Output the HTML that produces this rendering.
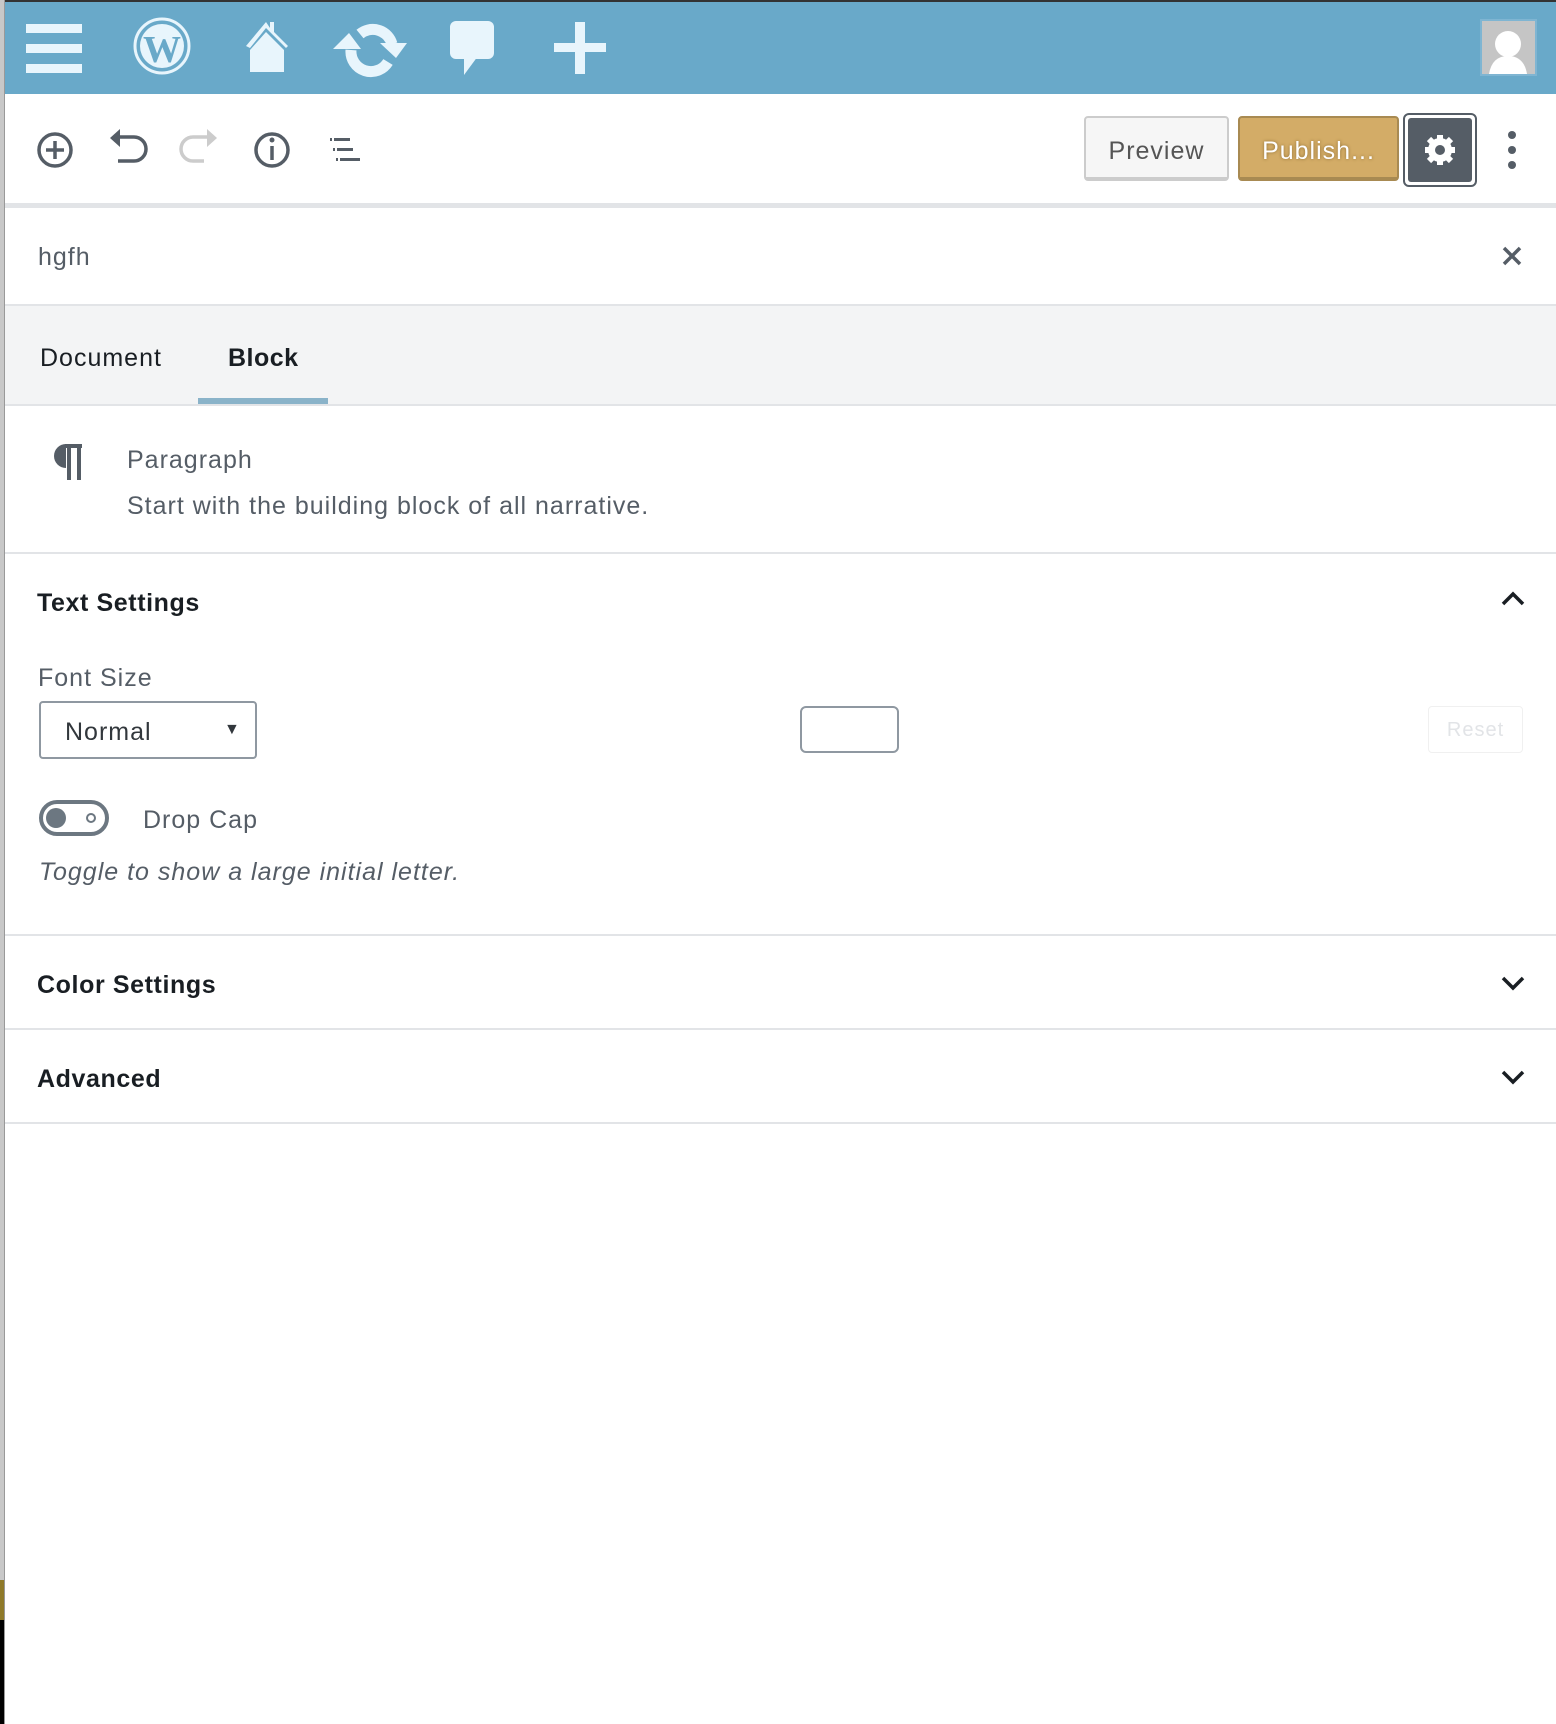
<!DOCTYPE html>
<html><head><meta charset="utf-8"><style>
*{margin:0;padding:0;box-sizing:border-box}
html,body{width:1556px;height:1724px;overflow:hidden;background:#fff;font-family:"Liberation Sans",sans-serif}
.abs{position:absolute}
#strip{left:0;top:0;width:5px;height:1724px;background:#c8c8c8;border-right:1px solid #999}
#bar{left:0;top:0;width:1556px;height:94px;background:#69a9c9;border-top:2px solid #333}
.t{position:absolute;white-space:nowrap;letter-spacing:1px}
.sep{position:absolute;left:5px;width:1551px;height:2px;background:#e2e4e7}
</style></head><body>
<div class="abs" id="bar">
<svg class="abs" style="left:0;top:-2px" width="1556" height="94">
 <g fill="#e8f5fc">
  <rect x="26" y="24" width="56" height="9"/><rect x="26" y="44" width="56" height="9"/><rect x="26" y="64" width="56" height="9"/>
  <circle cx="162" cy="46" r="27" fill="none" stroke="#e8f5fc" stroke-width="3"/>
  <circle cx="162" cy="46" r="22"/>
  <path d="M246 46 L266 22 L270 28 L270 22 L274 22 L274 32 L288 46 L286 48 L266 28 L250 48 Z"/>
  <path d="M250 50 L266 32 L284 50 L284 72 L250 72 Z"/>
  <path d="M360 34 A20 20 0 0 1 392 44" fill="none" stroke="#e8f5fc" stroke-width="11"/>
  <path d="M380 43 L407 43 L396 58 Z"/>
  <path d="M388 62 A20 20 0 0 1 351 50" fill="none" stroke="#e8f5fc" stroke-width="11"/>
  <path d="M333 49 L361 49 L349 33 Z"/>
  <rect x="450" y="21" width="44" height="38" rx="6"/><path d="M464 56 L464 75 L478 56 Z"/>
  <rect x="554" y="43" width="52" height="9"/><rect x="575" y="22" width="10" height="52"/>
  <rect x="1481" y="20" width="55" height="55" fill="#c5c5c5" stroke="#7fb5d2" stroke-width="2"/>
  <circle cx="1508" cy="44" r="13" fill="#fff"/><path d="M1489 74 Q1492 56 1508 56 Q1524 56 1527 74 Z" fill="#fff"/>
 </g>
 <text x="162" y="62" font-family="Liberation Serif" font-size="38" font-weight="bold" fill="#69a9c9" text-anchor="middle">W</text>
</svg>
</div>
<div class="abs" id="strip"></div>
<svg class="abs" style="left:0;top:94px" width="1556" height="114">
 <g fill="none" stroke="#555d66" stroke-width="3.5">
  <circle cx="55" cy="56" r="16"/><path d="M55 47 V65 M46 56 H64"/>
  <path d="M118 43 H134 A9 9 0 0 1 134 67 H118"/>
  <circle cx="272" cy="56" r="16"/><path d="M272 52 V66"/>
 </g>
 <path d="M110 44 L120 35 L120 53 Z" fill="#555d66"/>
 <circle cx="272" cy="46" r="2.5" fill="#555d66"/>
 <g fill="none" stroke="#ccc" stroke-width="3.5"><path d="M209 43 H193 A9 9 0 0 0 193 67 H204"/></g>
 <path d="M217 44 L207 35 L207 53 Z" fill="#ccc"/>
 <g fill="#555d66"><rect x="330" y="44" width="2" height="3"/><rect x="334" y="44" width="16" height="3"/><rect x="333" y="54" width="2" height="3"/><rect x="337" y="54" width="16" height="3"/><rect x="336" y="64" width="2" height="3"/><rect x="340" y="64" width="20" height="3"/></g>
 <g fill="#555d66"><circle cx="1512" cy="41" r="4"/><circle cx="1512" cy="56" r="4"/><circle cx="1512" cy="71" r="4"/></g>
</svg>
<div class="abs" style="left:1084px;top:116px;width:145px;height:65px;background:#f6f6f6;border:2px solid #ccc;border-bottom-width:4px;border-radius:4px;font-size:25px;color:#555;text-align:center;line-height:66px;letter-spacing:1px">Preview</div>
<div class="abs" style="left:1238px;top:116px;width:161px;height:65px;background:#d3ac67;border:2px solid #a88a52;border-bottom-width:4px;border-radius:4px;font-size:25px;color:#fff;text-align:center;line-height:66px;letter-spacing:1px;text-shadow:0 0 3px #8a6a30">Publish...</div>
<div class="abs" style="left:1403px;top:113px;width:74px;height:74px;border:2px solid #555d66;border-radius:6px;padding:3px"><div style="width:100%;height:100%;background:#555d66;border-radius:3px"></div></div>
<svg class="abs" style="left:1420px;top:130px" width="40" height="40" viewBox="0 0 40 40"><g fill="#fff"><circle cx="20" cy="20" r="12"/><g stroke="#fff" stroke-width="6"><path d="M20 5V35M5 20H35M9 9L31 31M31 9L9 31"/></g></g><circle cx="20" cy="20" r="5" fill="#555d66"/></svg>
<div class="sep" style="top:203px;height:5px"></div>
<div class="t" style="left:38px;top:243px;font-size:25px;color:#555d66">hgfh</div>
<svg class="abs" style="left:1500px;top:244px" width="24" height="24"><path d="M4 4L20 20M20 4L4 20" stroke="#555d66" stroke-width="3.5"/></svg>
<div class="sep" style="top:304px"></div>
<div class="abs" style="left:5px;top:306px;width:1551px;height:98px;background:#f3f4f5"></div>
<div class="t" style="left:40px;top:344px;font-size:25px;color:#191e23">Document</div>
<div class="t" style="left:228px;top:344px;font-size:25px;color:#191e23;font-weight:bold;letter-spacing:0.5px">Block</div>
<div class="abs" style="left:198px;top:398px;width:130px;height:6px;background:#8ab3c9"></div>
<div class="sep" style="top:404px"></div>
<svg class="abs" style="left:50px;top:440px" width="40" height="44"><path d="M16 4 A12 12 0 0 0 16 28 Z" fill="#555d66"/><rect x="15" y="4" width="17" height="4" fill="#555d66"/><rect x="17" y="4" width="4" height="36" fill="#555d66"/><rect x="27" y="4" width="4" height="36" fill="#555d66"/></svg>
<div class="t" style="left:127px;top:446px;font-size:25px;color:#555d66">Paragraph</div>
<div class="t" style="left:127px;top:492px;font-size:25px;color:#555d66">Start with the building block of all narrative.</div>
<div class="sep" style="top:552px"></div>
<div class="t" style="left:37px;top:589px;font-size:25px;color:#191e23;font-weight:bold;letter-spacing:0.6px">Text Settings</div>
<svg class="abs" style="left:1500px;top:590px" width="26" height="18"><path d="M3 14L13 4L23 14" fill="none" stroke="#191e23" stroke-width="3.5"/></svg>
<div class="t" style="left:38px;top:664px;font-size:25px;color:#555d66">Font Size</div>
<div class="abs" style="left:39px;top:701px;width:218px;height:58px;border:2px solid #8f98a1;border-radius:4px"></div>
<div class="t" style="left:65px;top:718px;font-size:25px;color:#32373c">Normal</div>
<div class="t" style="left:224px;top:721px;font-size:16px;color:#32373c">▼</div>
<div class="abs" style="left:800px;top:706px;width:99px;height:47px;border:2px solid #8f98a1;border-radius:6px"></div>
<div class="abs" style="left:1428px;top:706px;width:95px;height:47px;border:1px solid #f0f0f0;border-radius:4px;font-size:20px;color:#e2e4e7;text-align:center;line-height:47px;letter-spacing:1px">Reset</div>
<div class="abs" style="left:39px;top:800px;width:70px;height:36px;border:4px solid #6c7781;border-radius:18px"></div>
<div class="abs" style="left:46px;top:808px;width:20px;height:20px;background:#6c7781;border-radius:50%"></div>
<div class="abs" style="left:86px;top:813px;width:10px;height:10px;border:2px solid #6c7781;border-radius:50%"></div>
<div class="t" style="left:143px;top:806px;font-size:25px;color:#555d66">Drop Cap</div>
<div class="t" style="left:39px;top:858px;font-size:25px;color:#555d66;font-style:italic">Toggle to show a large initial letter.</div>
<div class="sep" style="top:934px"></div>
<div class="t" style="left:37px;top:971px;font-size:25px;color:#191e23;font-weight:bold;letter-spacing:0.6px">Color Settings</div>
<svg class="abs" style="left:1500px;top:974px" width="26" height="18"><path d="M3 4L13 14L23 4" fill="none" stroke="#191e23" stroke-width="3.5"/></svg>
<div class="sep" style="top:1028px"></div>
<div class="t" style="left:37px;top:1065px;font-size:25px;color:#191e23;font-weight:bold;letter-spacing:0.6px">Advanced</div>
<svg class="abs" style="left:1500px;top:1068px" width="26" height="18"><path d="M3 4L13 14L23 4" fill="none" stroke="#191e23" stroke-width="3.5"/></svg>
<div class="sep" style="top:1122px"></div>
<div class="abs" style="left:0;top:1580px;width:4px;height:40px;background:#8f7a2a"></div>
<div class="abs" style="left:0;top:1620px;width:4px;height:104px;background:#000"></div>
</body></html>
